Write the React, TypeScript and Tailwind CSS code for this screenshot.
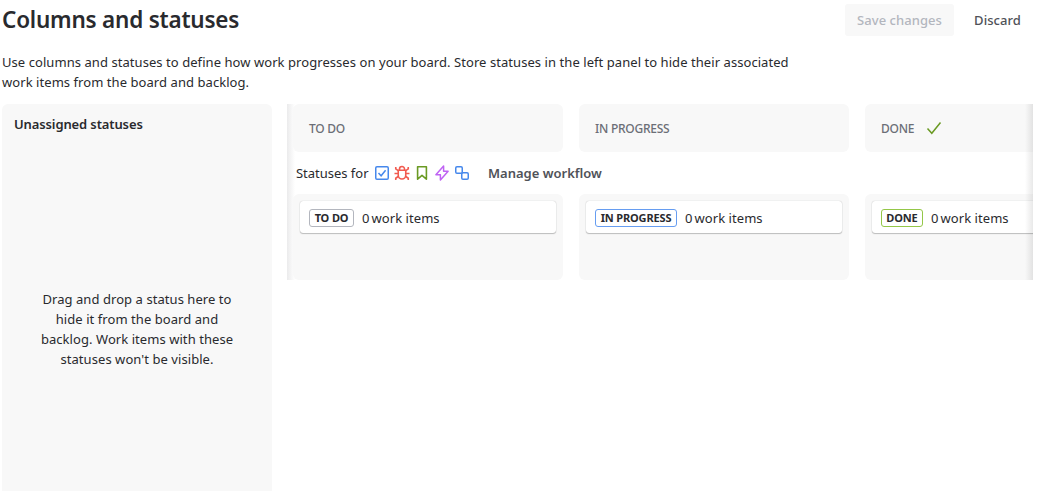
import React from "react";

type Column = { name: string; border: string; done?: boolean };

const columns: Column[] = [
  { name: "TO DO", border: "w-[45px] border-[#b3b6be]" },
  { name: "IN PROGRESS", border: "w-[82px] border-[#669df1]" },
  { name: "DONE", border: "w-[42px] border-[#94c748]", done: true },
];

function TaskIcon() {
  return (
    <svg width="16" height="16" viewBox="0 0 16 16" fill="none" stroke="#4688ec" strokeWidth="1.5">
      <rect x="1.75" y="1.75" width="12.5" height="12.5" rx="1.25" />
      <path d="M4.5 8.1l2.6 2.7 4.5-5.6" />
    </svg>
  );
}

function BugIcon() {
  return (
    <svg width="16" height="16" viewBox="0 0 16 16" fill="none" stroke="#f15b50" strokeWidth="1.6">
      <path d="M4.25 5.25h7.5v5a3.75 3.75 0 0 1-7.5 0z" />
      <path d="M5.5 5V4a2.5 2.5 0 0 1 5 0v1M.5 8.5h3.75M11.75 8.5h3.75M1.75 2v1.75l2.5 2M14.25 2v1.75l-2.5 2M1.75 15v-1.75l2.75-2M14.25 15v-1.75l-2.75-2" />
    </svg>
  );
}

function StoryIcon() {
  return (
    <svg width="16" height="16" viewBox="0 0 16 16" fill="none" stroke="#6a9a23" strokeWidth="1.6">
      <path d="M3.6 1.75h8.8v12.4L8 10.4l-4.4 3.75z" strokeLinejoin="round" />
    </svg>
  );
}

function EpicIcon() {
  return (
    <svg width="16" height="16" viewBox="0 0 16 16" fill="none" stroke="#bf63f3" strokeWidth="1.5">
      <path d="M9.6 1v5.25h4.5L6.4 15V9.75H1.9z" strokeLinejoin="round" />
    </svg>
  );
}

function SubtaskIcon() {
  return (
    <svg width="16" height="16" viewBox="0 0 16 16" fill="none" stroke="#4688ec" strokeWidth="1.5">
      <rect x="1.75" y="1.75" width="6.5" height="6.5" rx="1.25" />
      <rect x="7.75" y="7.75" width="6.5" height="6.5" rx="1.25" />
    </svg>
  );
}

function StatusColumn({ column }: { column: Column }) {
  return (
    <div className="h-[86px] w-[270px] shrink-0 rounded-md bg-[#f8f8f8] px-[7px] pt-[7px]">
      <div className="flex h-8 items-center gap-2 rounded-[3px] bg-white pt-px pl-[9px] shadow-[0_1px_1px_#1e1f2140,0_0_1px_#1e1f214f]">
        <span
          className={`flex h-[18px] shrink-0 items-center justify-center rounded-[3px] border text-[11px] font-bold tracking-[-0.15px] whitespace-nowrap ${column.border}`}
        >
          {column.name}
        </span>
        <span className="flex gap-[2px] whitespace-nowrap">
          <span>0</span>
          <span>work items</span>
        </span>
      </div>
    </div>
  );
}

export default function App() {
  return (
    <div className="flex h-[491px] w-[1058px] flex-col overflow-hidden bg-white pl-0.5 font-['Noto_Sans',sans-serif] text-[13px] leading-5 tracking-[0.06px] text-[#292a2e]">
      <header className="flex h-[52px] shrink-0 items-start justify-between pr-[25px]">
        <h1 className="mt-1 text-[22.5px] leading-8 font-semibold tracking-[-0.22px] whitespace-nowrap">Columns and statuses</h1>
        <div className="mt-1 flex font-medium">
          <button className="h-8 w-[109px] rounded-[3px] bg-[#f8f8f8] whitespace-nowrap text-[#b3b6be]">Save changes</button>
          <button className="ml-2 h-8 w-[71px] text-[#505258]">Discard</button>
        </div>
      </header>
      <p className="h-[52px] shrink-0 whitespace-nowrap">
        Use columns and statuses to define how work progresses on your board. Store statuses in the left panel to hide their associated
        <br />
        work items from the board and backlog.
      </p>
      <div className="flex min-h-0 flex-1">
        <section className="flex w-[270px] shrink-0 flex-col rounded-t-md bg-[#f8f8f8]">
          <h2 className="mt-2.5 ml-3 font-semibold tracking-[-0.12px]">Unassigned statuses</h2>
          <p className="mt-[155px] text-center">
            Drag and drop a status here to
            <br />
            hide it from the board and
            <br />
            backlog. Work items with these
            <br />
            statuses won't be visible.
          </p>
        </section>
        <section className="relative ml-[15px] h-44 w-[746px] shrink-0 overflow-hidden">
          <div className="absolute inset-y-0 left-0 w-2 bg-linear-to-r from-[#ebebec] to-white" />
          <div className="relative ml-1.5 flex h-full flex-col">
            <div className="flex gap-4">
              {columns.map((c) => (
                <div
                  key={c.name}
                  className="flex h-12 w-[270px] shrink-0 items-center rounded-md bg-[#f8f8f8] pl-4 text-xs font-medium tracking-[-0.25px] text-[#6b6e76]"
                >
                  <span className="pt-0.5">{c.name}</span>
                  {c.done && (
                    <svg className="ml-3" width="16" height="16" viewBox="0 0 16 16" fill="none" stroke="#6a9a23" strokeWidth="1.5">
                      <path d="M1.5 8.5l4.3 4.8L14.5 2.5" />
                    </svg>
                  )}
                </div>
              ))}
            </div>
            <div className="flex h-[42px] items-center pl-[3px]">
              <span className="w-[78px] tracking-[-0.02px] whitespace-nowrap">Statuses for</span>
              <div className="flex gap-1">
                <TaskIcon />
                <BugIcon />
                <StoryIcon />
                <EpicIcon />
                <SubtaskIcon />
              </div>
              <span className="ml-[18px] font-semibold tracking-normal text-[#505258]">Manage workflow</span>
            </div>
            <div className="flex gap-4">
              {columns.map((c) => (
                <StatusColumn key={c.name} column={c} />
              ))}
            </div>
          </div>
          <div className="absolute inset-y-0 right-0 w-2 bg-linear-to-r from-transparent to-[#1e1f21]/10" />
        </section>
      </div>
    </div>
  );
}
